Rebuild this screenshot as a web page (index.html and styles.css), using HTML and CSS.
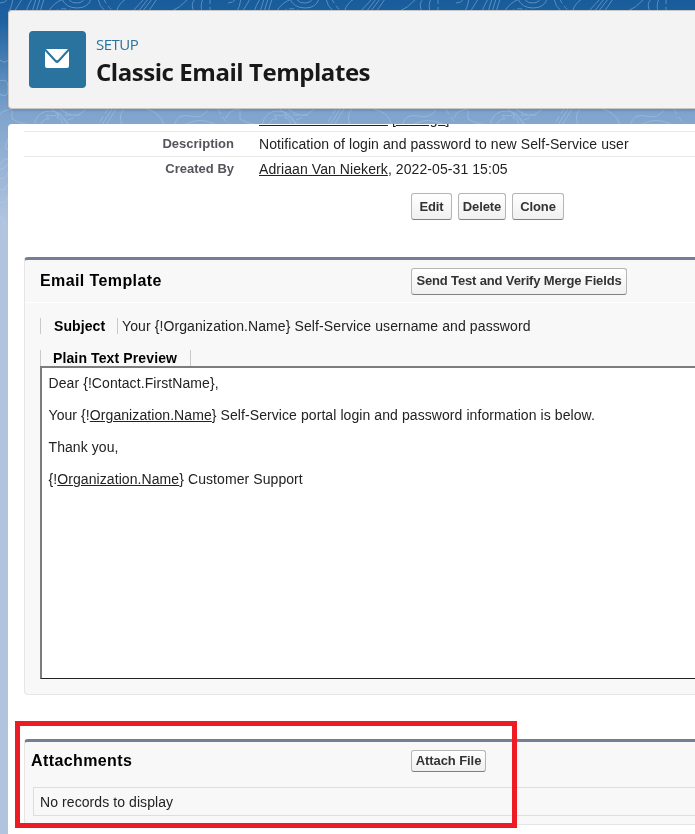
FILE: index.html
```html
<!DOCTYPE html>
<html lang="en">
<head>
<meta charset="utf-8">
<title>Classic Email Templates</title>
<link rel="stylesheet" href="styles.css">
</head>
<body>
<svg class="contours" width="695" height="240" viewBox="0 0 695 240" aria-hidden="true">
  <defs>
    <g id="topo">
      <path d="M0 3Q5 3 8-1M13-1Q12 6 8 14M22-1Q18 6 14 12M32-1Q28 5 26 12M36-1L32 12M40-1L36 12M44-1L40 12M48 12Q54 2 64-1M62-1Q66 8 77 8T91-1M68-1Q72 4 78 3T84-1M98-1Q99 6 106 12M126-1Q119 3 116 12M144-1L132 12M148-1L138 12M152-1L142 12M157-1L148 12M170 12Q180 8 188-1M194 12Q190 4 195-1M202 12Q200 4 203-1"/>
      <path stroke-dasharray="5 3" d="M104-1Q106 5 114 12M54 12Q62 6 72 11M210-1V12"/>
      <path d="M12 110V119Q22 125 35 125M52 109L70 125M60 109Q76 122 86 109M112 109L102 125M116 109L106 125M122 125Q118 115 124 109M146 109Q160 112 164 125M174 125Q178 113 190 116T208 110M184 125Q196 119 205 121T216 125"/>
      <path stroke-dasharray="6 3" d="M65 115H80M68 120L76 117M108 109L98 125M218 109Q222 118 230 125"/>
      <path d="M-2 118Q1 110 12 109M34 125Q37 111 50 111T68 125M41 125Q43 118 49 119L46 115Q54 117 59 114L57 118Q62 118 63 125"/>
    </g>
  </defs>
  <g class="lines">
    <use href="#topo"/>
    <use href="#topo" x="228"/>
    <use href="#topo" x="456"/>
    <path d="M0 60Q5 64 8 60M0 81Q7 78 8 86V93Q4 98 0 94M8 139Q3 149 8 150M0 164Q6 156 8 160M0 170L8 165M0 178Q6 180 8 172M0 190Q6 191 8 184M0 202Q7 204 8 196M0 217Q4 216 4 223V236L0 241"/>
  </g>
</svg>
<div class="page">
  <header class="page-header">
    <span class="header-icon">
      <svg width="24" height="19" viewBox="0 0 24 19" aria-hidden="true"><path d="M1 0H23L13.2 10.7Q12 11.9 10.8 10.7ZM0 2L10 13.1Q12 15 14 13.1L24 2V17Q24 19 22 19H2Q0 19 0 17Z"/></svg>
    </span>
    <div class="titles">
      <div class="eyebrow">SETUP</div>
      <h1>Classic Email Templates</h1>
    </div>
  </header>
  <main class="content">
    <div class="detail">
      <div class="row cut"><span class="label"></span><span class="value"><a>Adriaan Van Niekerk</a> <span>[<a>Change</a>]</span></span></div>
      <div class="row"><span class="label">Description</span><span class="value">Notification of login and password to new Self-Service user</span></div>
      <div class="row last"><span class="label">Created By</span><span class="value"><a>Adriaan Van Niekerk</a>, 2022-05-31 15:05</span></div>
    </div>
    <div class="actions">
      <button class="b-edit">Edit</button><button class="b-delete">Delete</button><button class="b-clone">Clone</button>
    </div>
    <section class="card template">
      <div class="card-head"><h2>Email Template</h2><button class="b-send">Send Test and Verify Merge Fields</button></div>
      <div class="subject"><b>Subject</b><span>Your {!Organization.Name} Self-Service username and password</span></div>
      <div class="preview-label"><b>Plain Text Preview</b></div>
      <div class="preview">
        <p>Dear {!Contact.FirstName},</p>
        <p>Your {!<a>Organization.Name</a>} Self-Service portal login and password information is below.</p>
        <p>Thank you,</p>
        <p>{!<a>Organization.Name</a>} Customer Support</p>
      </div>
    </section>
    <section class="card attachments">
      <div class="card-head"><h2>Attachments</h2><button class="b-attach">Attach File</button></div>
      <div class="empty">No records to display</div>
    </section>
  </main>
</div>
<div class="highlight"></div>
</body>
</html>
```

FILE: styles.css
```css
* { box-sizing: border-box; }
body {
  margin: 0;
  width: 695px;
  height: 834px;
  overflow: hidden;
  position: relative;
  font: 14px/16px "Liberation Sans", Arial, sans-serif;
  letter-spacing: .08px;
  color: #222;
  background: linear-gradient(#195c9c 0, #1d61a1 20px, #80a4cd 115px, #b0c4df 220px);
}
.contours { position: absolute; left: 0; top: 0; }
.lines { fill: none; stroke: #b5d2ec; stroke-width: 1; opacity: .42; }
.page { position: relative; padding: 10px 0 0 8px; }
.page-header {
  display: flex;
  height: 99px;
  padding: 20px 0 0 20px;
  background: #f3f3f3;
  border: 1px solid #c9c7c5;
  border-right: 0;
  border-radius: 4px 0 0 4px;
  box-shadow: 0 2px 2px rgba(0, 0, 0, .1);
}
.header-icon {
  display: flex;
  align-items: center;
  justify-content: center;
  width: 57px;
  height: 57px;
  margin-right: 10px;
  border-radius: 4px;
  background: #2a739e;
}
.header-icon svg { fill: #fff; margin: 0 1px 2px 0; }
.titles { font-family: "Open Sans", "Noto Sans", sans-serif; padding-top: 3px; }
.eyebrow { font-size: 15px; line-height: 20px; color: #2a739e; letter-spacing: -.5px; }
h1 { margin: 3px 0 0; font-size: 24px; line-height: 30px; font-weight: 700; color: #181818; letter-spacing: -.45px; }
.content {
  height: 710px;
  margin-top: 15px;
  padding-left: 16px;
  overflow: hidden;
  background: #fff;
  border-radius: 4px 0 0 0;
}
a { color: inherit; text-decoration: underline; }
.row { display: flex; height: 25px; padding-top: 4px; border-bottom: 1px solid #e9e9e9; }
.row.cut { height: 8px; padding: 0 0 5px; align-items: flex-end; line-height: 14px; }
.row.last { border: 0; }
.label { width: 210px; margin-right: 25px; text-align: right; font-size: 13px; letter-spacing: 0; font-weight: 700; color: #54545c; }
.actions { display: flex; gap: 6px; padding: 11px 0 0 387px; height: 75px; }
button {
  height: 27px;
  padding: 0;
  border: 1px solid #b5b5b5;
  border-bottom-color: #7f7f7f;
  border-radius: 3px;
  background: linear-gradient(#fff, #f0f0f0);
  color: #333;
  font: 700 13px/16px "Liberation Sans", Arial, sans-serif;
  letter-spacing: -.08px;
  white-space: nowrap;
}
.b-edit { width: 41px; }
.b-delete { width: 48px; }
.b-clone { width: 52px; }
.b-send { width: 216px; letter-spacing: -.15px; }
.b-attach { width: 75px; height: 22px; }
.card {
  background: #f8f8f8;
  border: 1px solid #e6e6e6;
  border-top: 3px solid #747e96;
  border-right: 0;
  border-radius: 4px 0 0 4px;
}
.card-head { display: flex; align-items: center; }
h2 { margin: 0; font-size: 16px; line-height: 20px; color: #000; letter-spacing: .4px; }
.template { height: 438px; padding-left: 15px; }
.template .card-head { height: 43px; margin-left: -15px; padding-left: 15px; border-bottom: 1px solid #fff; }
.template h2 { width: 371px; }
.subject { display: flex; height: 16px; margin-top: 15px; border-left: 1px solid #c9c9c9; }
.subject b { width: 77px; padding-left: 13px; border-right: 1px solid #c9c9c9; color: #000; }
.subject span { padding-left: 4px; letter-spacing: .1px; }
.preview-label { display: flex; height: 16px; margin-top: 16px; border-left: 1px solid #c9c9c9; }
.preview-label b { width: 150px; padding-left: 12px; border-right: 1px solid #c9c9c9; color: #000; letter-spacing: .12px; }
.preview {
  height: 313px;
  padding: 7px 0 0 6.5px;
  background: #fff;
  border: solid #7c7c7c;
  border-width: 2px 0 1px 2px;
  border-bottom-color: #222;
}
.preview p { margin: 0 0 16px; white-space: nowrap; }
.attachments { height: 86px; margin-top: 44px; padding-left: 6px; }
.attachments .card-head { height: 37px; }
.attachments h2 { width: 380px; }
.empty { height: 29px; margin: 8px 0 0 2px; padding: 6px; border: 1px solid #dedede; border-right: 0; }
.highlight { position: absolute; left: 15px; top: 721px; width: 502px; height: 107px; border: 5px solid #ed1c24; }
```
